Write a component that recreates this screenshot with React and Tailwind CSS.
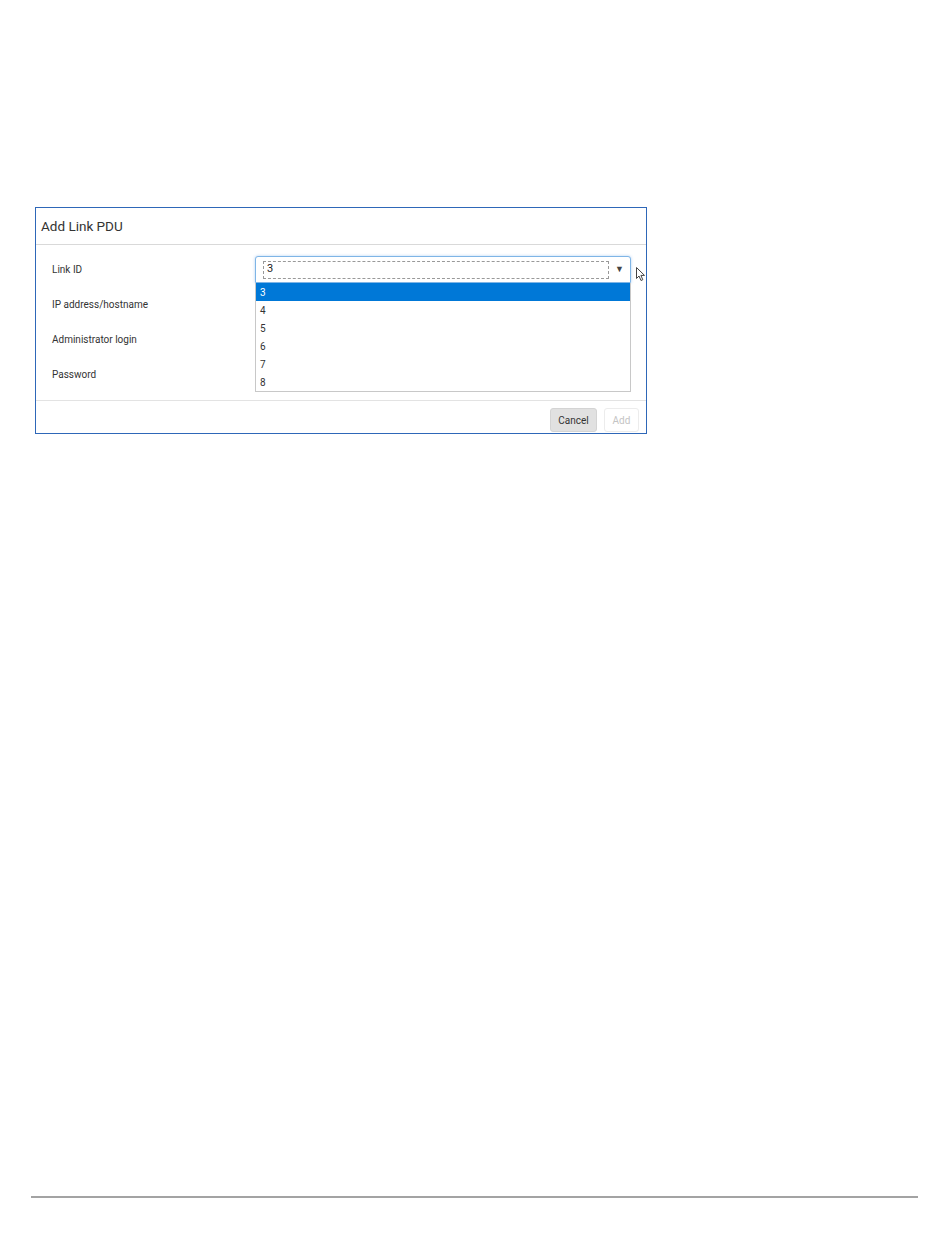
import React from "react";

const fields = ["Link ID", "IP address/hostname", "Administrator login", "Password"];
const options = ["3", "4", "5", "6", "7", "8"];

const Cursor = () => (
  <svg width="10" height="15" viewBox="0 0 10 15" className="absolute left-[600px] top-[22px]">
    <path d="M0.5 0.5 L0.5 11.5 L3 9 L5 13.5 L6.8 12.7 L4.9 8.4 L8.5 8.4 Z" fill="#fff" stroke="#444" strokeWidth="1" strokeLinejoin="round" />
  </svg>
);

const LinkSelect = () => (
  <div className="relative w-[376px]">
    <div className="h-[27px] flex items-center border border-[#7fb5e6] rounded-t-[3px] shadow-[0_0_3px_rgba(80,150,230,0.45)] bg-white pl-[7px] pr-[6px]">
      <div className="flex-1 h-[18px] border border-dashed border-[#999] flex items-center pl-[3px] text-[11px] text-[#222]">
        3
      </div>
      <span className="ml-[6px] text-[9px] text-[#444] leading-none">▼</span>
    </div>
    <div className="absolute left-0 top-[27px] w-full bg-white border border-[#c8c8c8] border-t-0 z-10">
      {options.map((o, i) => (
        <div
          key={o}
          className={
            i === 0
              ? "h-[18px] flex items-center pl-[4px] text-[10px] bg-[#0078d7] text-white"
              : "h-[18px] flex items-center pl-[4px] text-[10px] text-[#333]"
          }
        >
          {o}
        </div>
      ))}
    </div>
  </div>
);

export default function App() {
  return (
    <div className="w-[950px] h-[1260px] bg-white relative font-['Roboto',_'Liberation_Sans',_sans-serif]">
      <div className="pt-[207px] pl-[35px]">
        <div className="w-[612px] border border-[#2e67b8] bg-white relative">
          <div className="h-[37px] flex items-center pl-[5px] text-[13.5px] text-[#333] border-b border-[#d9d9d9]">
            Add Link PDU
          </div>
          <div className="pt-[7px] pb-[8px] pl-[16px] pr-[15px] relative">
            {fields.map((f, i) => (
              <div key={f} className="h-[35px] flex items-center">
                <div className="w-[203px] text-[10px] text-[#333]">{f}</div>
                {i === 0 && <LinkSelect />}
              </div>
            ))}
            <Cursor />
          </div>
          <div className="border-t border-[#e3e3e3] h-[33px] flex items-start pt-[7px] justify-end pr-[7px] gap-[7px]">
            <button className="w-[47px] h-[24px] rounded-[3px] bg-[#e1e1e1] border border-[#d4d4d4] text-[10px] text-[#333]">
              Cancel
            </button>
            <button className="w-[35px] h-[24px] rounded-[3px] bg-white border border-[#ececec] text-[10px] text-[#c4c4c4]">
              Add
            </button>
          </div>
        </div>
      </div>
      <div className="absolute left-[31px] top-[1196px] w-[887px] h-[2px] bg-[#a3a3a3]" />
    </div>
  );
}
